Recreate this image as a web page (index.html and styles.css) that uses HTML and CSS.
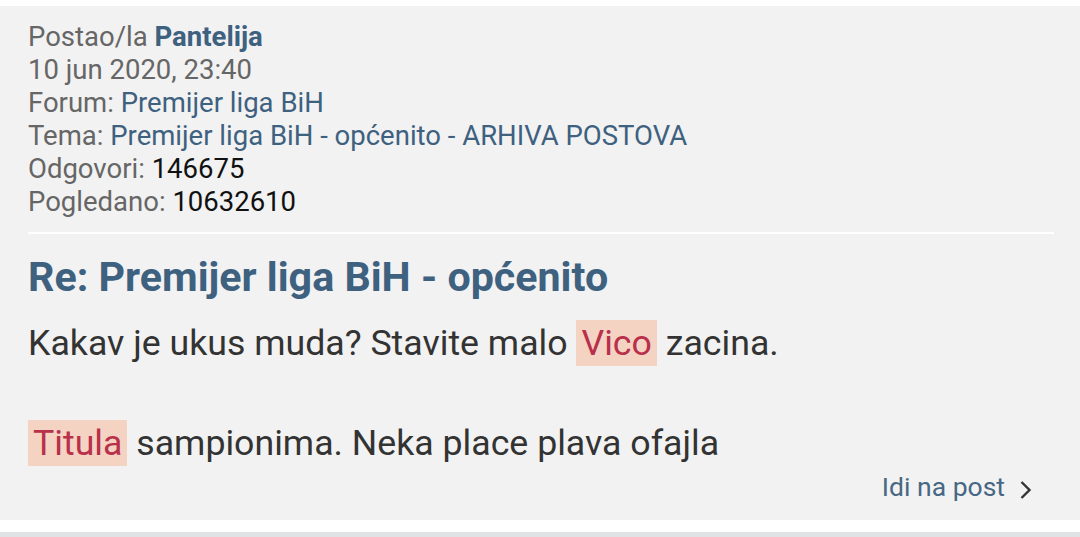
FILE: index.html
```html
<!DOCTYPE html>
<html>
<head>
<meta charset="utf-8">
<link rel="stylesheet" href="styles.css">
</head>
<body>
<div class="page">
  <div class="card">
    <div class="meta">
      <div>Postao/la <a class="user">Pantelija</a></div>
      <div>10 jun 2020, 23:40</div>
      <div>Forum: <a class="link">Premijer liga BiH</a></div>
      <div>Tema: <a class="link">Premijer liga BiH - općenito - ARHIVA POSTOVA</a></div>
      <div>Odgovori: <span class="num">146675</span></div>
      <div>Pogledano: <span class="num">10632610</span></div>
    </div>
    <div class="sep"></div>
    <h3 class="title">Re: Premijer liga BiH - općenito</h3>
    <div class="content">Kakav je ukus muda? Stavite malo <span class="hl">Vico</span> zacina.<br><br><span class="hl">Titula</span> sampionima. Neka place plava ofajla</div>
    <div class="actions">
      <a class="goto">Idi na post
        <svg class="chev" width="16" height="22" viewBox="0 0 16 22"><path d="M3.5 3 L11.5 11 L3.5 19" fill="none" stroke="#333" stroke-width="2.4"/></svg>
      </a>
    </div>
  </div>
  <div class="next"></div>
</div>
</body>
</html>
```
FILE: styles.css
```css
html, body {
  margin: 0;
  padding: 0;
  background: #ffffff;
}
body {
  font-family: Roboto, "Noto Sans", sans-serif;
  width: 1080px;
  height: 537px;
  overflow: hidden;
}
.page {
  padding-top: 6px;
}
.card {
  background: #f2f2f2;
  padding: 14px 26px 0 28px;
  box-sizing: border-box;
  height: 514px;
}
.meta {
  font-size: 27.5px;
  line-height: 33px;
  color: #666666;
}
.meta a {
  text-decoration: none;
}
.user {
  color: #3e6180;
  font-weight: bold;
}
.link {
  color: #3e6180;
}
.num {
  color: #111111;
}
.sep {
  height: 2px;
  background: #ffffff;
  margin-top: 14px;
}
.title {
  margin: 19px 0 0 0;
  font-size: 41.2px;
  line-height: 48px;
  font-weight: bold;
  color: #3e6180;
}
.content {
  margin-top: 17px;
  font-size: 35.7px;
  line-height: 50px;
  color: #333333;
}
.hl {
  background: #f5d3c3;
  color: #b8304a;
  padding: 2px 5px;
}
.actions {
  display: flex;
  justify-content: flex-end;
  margin-top: 2px;
  padding-right: 20px;
}
.goto {
  display: flex;
  align-items: center;
  gap: 13px;
  font-size: 26.5px;
  line-height: 34px;
  color: #476784;
  text-decoration: none;
}
.chev {
  margin-top: 5px;
}
.next {
  margin-top: 12px;
  height: 10px;
  background: #e0e2e4;
}
```
